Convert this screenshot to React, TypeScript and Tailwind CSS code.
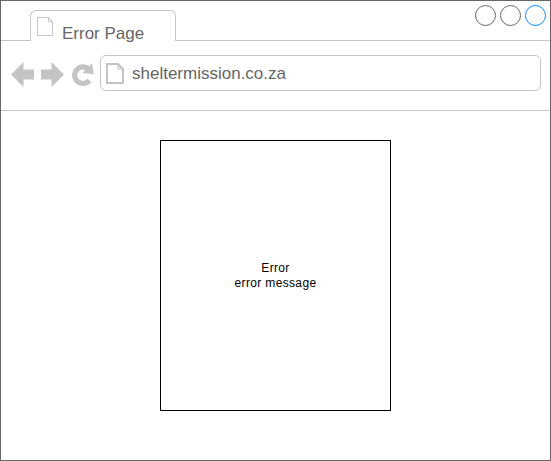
function WindowControls() {
  return (
    <svg className="ml-auto mt-1 mr-[3px] h-6 w-[73px]" viewBox="474 5 73 24" fill="none">
      <circle cx="485.5" cy="15.5" r="10" stroke="#666666" />
      <circle cx="510.5" cy="15.5" r="10" stroke="#666666" />
      <circle cx="535.5" cy="15.5" r="10" stroke="#008cff" />
    </svg>
  );
}

function Tab() {
  return (
    <div className="ml-[29px] mt-[9px] flex h-[31px] w-[146px] rounded-t-[6px] border border-b-0 border-[#c4c4c4] bg-white">
      <svg className="ml-[5px] mt-[5px] h-5 w-[18px] shrink-0" viewBox="36 16 18 20" fill="none" stroke="#c4c4c4">
        <path d="M37.5 17.5H48.5L52.5 21.5V35.5H37.5ZM48.5 17.5V21.5H52.5" />
      </svg>
      <span className="ml-[8px] mt-[11px] text-[17px] leading-6 text-[#666666]">Error Page</span>
    </div>
  );
}

function NavigationIcons() {
  return (
    <svg className="h-[36px] w-[89px] shrink-0" viewBox="10 55 89 36" fill="#c4c4c4">
      <path d="M11 74.5L23.5 62V69.5H34V79.5H23.5V87Z" />
      <path d="M64 74.5L51.5 62V69.5H41V79.5H51.5V87Z" />
      <path d="M89.4 80.4A8.3 8.3 0 1 1 88.6 69.1" fill="none" stroke="#c4c4c4" strokeWidth="5.2" />
      <path d="M92 63.3L93.8 74.2L82.3 73Z" />
    </svg>
  );
}

function AddressBar() {
  return (
    <div className="flex h-9 w-[441px] rounded-[6px] border border-[#c4c4c4] bg-white">
      <svg className="ml-1 mt-[6px] h-6 w-[20px] shrink-0" viewBox="105 62 20 24" fill="none" stroke="#c4c4c4" strokeWidth="2">
        <path d="M107 64H118L123 69V83H107Z" />
        <path d="M118 64V69H123" strokeWidth="1.2" />
      </svg>
      <span className="ml-[7px] mt-[6px] text-[17px] leading-6 text-[#666666]">sheltermission.co.za</span>
    </div>
  );
}

export default function App() {
  return (
    <div className="flex h-[461px] w-[551px] flex-col border border-[#666666] bg-white font-['Liberation_Sans',Arial,sans-serif]">
      <div className="flex h-10 shrink-0">
        <Tab />
        <WindowControls />
      </div>
      <div className="-mt-px flex h-px shrink-0">
        <div className="w-[29px] bg-[#c4c4c4]" />
        <div className="w-[146px]" />
        <div className="flex-1 bg-[#c4c4c4]" />
      </div>
      <div className="flex h-[70px] shrink-0 border-b border-[#c4c4c4] pl-[9px] pt-[14px]">
        <NavigationIcons />
        <div className="ml-px">
          <AddressBar />
        </div>
      </div>
      <main className="flex flex-1 justify-center pt-[29px]">
        <div className="flex h-[271px] w-[231px] flex-col items-center justify-center border border-black text-center text-xs leading-[15px] tracking-[0.35px] text-black">
          <p>Error</p>
          <p>error message</p>
        </div>
      </main>
    </div>
  );
}
